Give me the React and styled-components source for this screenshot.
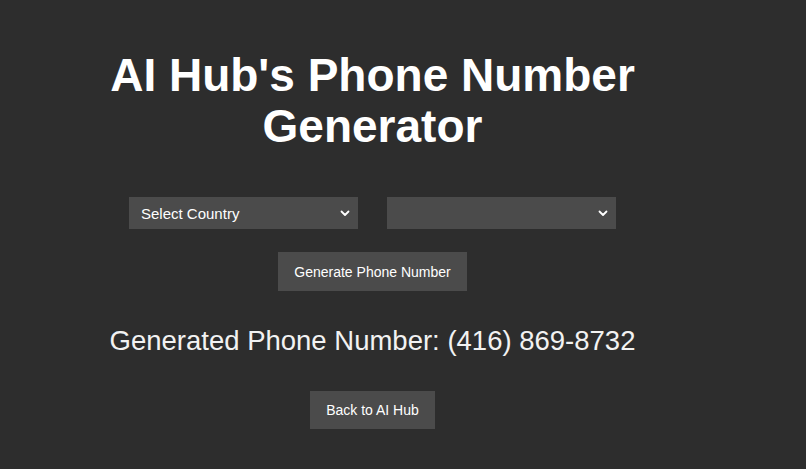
import React, { useState } from "react";
import styled, { createGlobalStyle } from "styled-components";

const GlobalStyle = createGlobalStyle`
  html, body {
    margin: 0;
    padding: 0;
    background: #2d2d2d;
    font-family: "Liberation Sans", Arial, sans-serif;
  }
`;

const Page = styled.div`
  width: 745px;
  min-height: 469px;
  padding-top: 50px;
  box-sizing: border-box;
  display: flex;
  flex-direction: column;
  align-items: center;
  color: #ffffff;
`;

const Title = styled.h1`
  margin: 0;
  width: 560px;
  font-size: 46px;
  line-height: 51px;
  font-weight: bold;
  text-align: center;
  color: #ffffff;
`;

const SelectRow = styled.div`
  margin-top: 45px;
  display: flex;
  gap: 29px;
`;

const SelectWrap = styled.div`
  position: relative;
  width: 229px;
  height: 32px;
`;

const Select = styled.select`
  appearance: none;
  -webkit-appearance: none;
  width: 100%;
  height: 100%;
  border: none;
  outline: none;
  border-radius: 0;
  background: #4b4b4b;
  color: #ffffff;
  font-family: "Liberation Sans", Arial, sans-serif;
  font-size: 15px;
  padding: 0 30px 0 12px;
`;

const Chevron = styled.svg`
  position: absolute;
  right: 8px;
  top: 13px;
  width: 10px;
  height: 7px;
  pointer-events: none;
`;

const Button = styled.button`
  margin-top: ${(p) => p.$top}px;
  height: ${(p) => p.$height}px;
  padding: 0 ${(p) => p.$pad}px;
  border: none;
  border-radius: 0;
  background: #4b4b4b;
  color: #ffffff;
  font-family: "Liberation Sans", Arial, sans-serif;
  font-size: 14px;
  cursor: pointer;
`;

const Result = styled.p`
  margin: 34px 0 0;
  font-size: 27.5px;
  line-height: 32px;
  color: #f2f2f2;
`;

const countries = ["United States", "Canada", "United Kingdom", "Australia"];

const DropDown = ({ value, onChange, children }) => (
  <SelectWrap>
    <Select value={value} onChange={onChange}>
      {children}
    </Select>
    <Chevron viewBox="0 0 10 7">
      <path
        d="M1.5 1.5 L5 5 L8.5 1.5"
        fill="none"
        stroke="#ffffff"
        strokeWidth="1.8"
        strokeLinecap="round"
        strokeLinejoin="round"
      />
    </Chevron>
  </SelectWrap>
);

export default function App() {
  const [country, setCountry] = useState("");
  const [region, setRegion] = useState("");
  const [phone] = useState("(416) 869-8732");

  return (
    <>
      <GlobalStyle />
      <Page>
        <Title>AI Hub's Phone Number Generator</Title>
        <SelectRow>
          <DropDown value={country} onChange={(e) => setCountry(e.target.value)}>
            <option value="">Select Country</option>
            {countries.map((c) => (
              <option key={c} value={c}>
                {c}
              </option>
            ))}
          </DropDown>
          <DropDown value={region} onChange={(e) => setRegion(e.target.value)}>
            <option value=""></option>
          </DropDown>
        </SelectRow>
        <Button $top={23} $height={39} $pad={16}>
          Generate Phone Number
        </Button>
        <Result>Generated Phone Number: {phone}</Result>
        <Button $top={34} $height={38} $pad={16}>
          Back to AI Hub
        </Button>
      </Page>
    </>
  );
}
